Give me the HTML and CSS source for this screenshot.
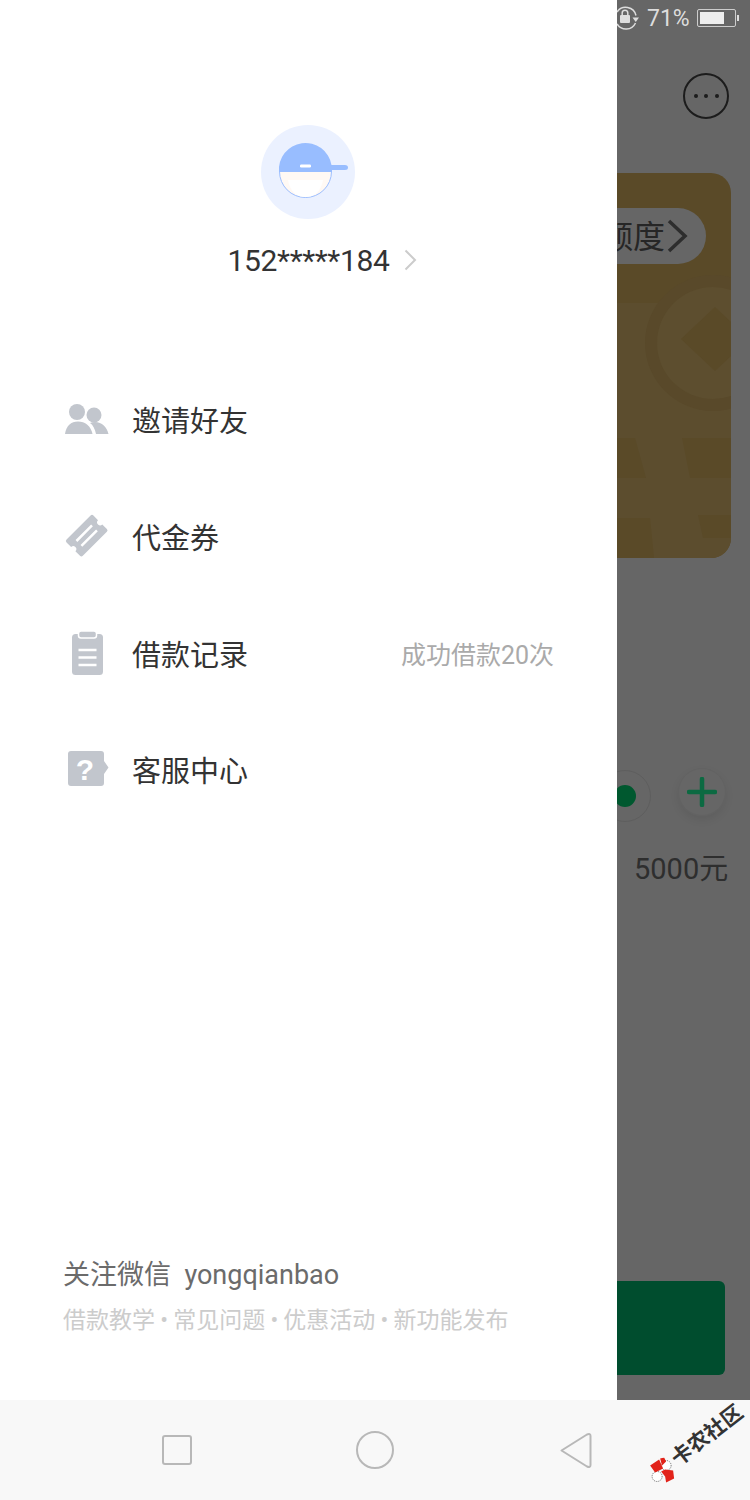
FILE: index.html
```html
<!DOCTYPE html>
<html lang="zh">
<head>
<meta charset="utf-8">
<title>用钱宝</title>
<link rel="stylesheet" href="styles.css">
</head>
<body>
<div class="screen">
  <div class="main">
    <aside class="drawer">
      <div class="avatar">
        <svg width="94" height="94" viewBox="0 0 94 94">
          <circle cx="47" cy="47" r="47" fill="#ebf1ff"/>
          <path d="M18.500 46.500H70.500A26 26 0 0 1 18.500 46.500Z" fill="#fff9f4" stroke="#9cbeff" stroke-width="1"/>
          <path d="M27 55H62C60 66 54 72 44.500 72S29 66 27 55Z" fill="#fff"/>
          <path d="M18 47A26.500 26.500 0 0 1 70.500 40H84Q87 40 87 42.500T84 45H71V47Z" fill="#98bdff"/>
          <rect x="39" y="39.500" width="11" height="3" rx="1.200" fill="#fff"/>
        </svg>
      </div>
      <div class="account">
        <span class="phone">152*****184</span>
        <svg class="account-arrow" width="13" height="22" viewBox="0 0 13 22"><path d="M1.500 1.500 11 11 1.500 20.500" fill="none" stroke="#ccc" stroke-width="2"/></svg>
      </div>
      <nav class="menu">
        <div class="item">
          <svg class="icon" width="46" height="32" viewBox="0 0 46 32">
            <circle cx="13" cy="9" r="8" fill="#c2c6cd"/>
            <circle cx="30" cy="12" r="7.500" fill="#c2c6cd"/>
            <path d="M1 31C2 23 7 18.500 14 18.500S27 23 28.500 31Z" fill="#c2c6cd"/>
            <path d="M26 20Q28 19 31 19C38 19 43 24 44.500 31H32C31 26 29 22 26 20Z" fill="#c2c6cd"/>
          </svg>
          <span class="label">邀请好友</span>
        </div>
        <div class="item">
          <svg class="icon" width="46" height="44" viewBox="0 0 46 44">
            <g transform="translate(22.700 21.700) rotate(-45)">
              <path d="M-17 -11.500H17Q19 -11.500 19 -9.500V-3A3 3 0 0 0 19 3V9.500Q19 11.500 17 11.500H-17Q-19 11.500 -19 9.500V3A3 3 0 0 0 -19 -3V-9.500Q-19 -11.500 -17 -11.500Z" fill="#c2c6cd"/>
              <path d="M-11 -3.500H11M-11 3.500H11" stroke="#fff" stroke-width="2.500"/>
            </g>
          </svg>
          <span class="label">代金券</span>
        </div>
        <div class="item">
          <svg class="icon" width="46" height="44" viewBox="0 0 46 44">
            <rect x="8" y="3" width="31" height="41" rx="3.500" fill="#c2c6cd"/>
            <rect x="14.500" y="0" width="18" height="7" rx="2.500" fill="#c2c6cd" stroke="#fff" stroke-width="1.500"/>
            <path d="M14.500 19H32.500M14.500 26.500H32.500M14.500 34H32.500" stroke="#fff" stroke-width="2.500"/>
          </svg>
          <span class="label">借款记录</span>
          <span class="note">成功借款20次</span>
        </div>
        <div class="item">
          <svg class="icon" width="46" height="36" viewBox="0 0 46 36">
            <path d="M7 0H37Q40 0 40 3V10L44.500 16.500 40 23V32Q40 35 37 35H7Q4 35 4 32V3Q4 0 7 0Z" fill="#c2c6cd"/>
            <text x="21" y="29" class="icon-q">?</text>
          </svg>
          <span class="label">客服中心</span>
        </div>
      </nav>
      <footer class="follow">
        <p class="wechat">关注微信&nbsp;&nbsp;yongqianbao</p>
        <p class="topics">借款教学 • 常见问题 • 优惠活动 • 新功能发布</p>
      </footer>
    </aside>
    <section class="backdrop">
      <div class="status">
        <svg class="rotate-lock" width="22" height="24" viewBox="0 0 22 24">
          <path d="M0 6A10.500 10.500 0 0 1 19 9.500M18.500 17A10.500 10.500 0 0 1 0 18" fill="none" stroke="#ddd" stroke-width="1.500"/>
          <rect x="3" y="9" width="10" height="8" rx="1" fill="#ddd"/>
          <path d="M5.200 9V7A2.800 2.800 0 0 1 10.800 7V9" fill="none" stroke="#ddd" stroke-width="1.500"/>
          <path d="M15.500 11.500H22L18.750 16Z" fill="#ddd"/>
        </svg>
        <span class="battery-text">71%</span>
        <span class="battery"><span class="battery-level"></span></span>
        <span class="battery-tip"></span>
      </div>
      <div class="more">
        <span class="more-dot"></span><span class="more-dot"></span><span class="more-dot"></span>
      </div>
      <div class="card">
        <svg class="card-art" width="114" height="385" viewBox="0 0 114 385">
          <path d="M0 130H114V385H0Z" fill="#5c4d2e"/>
          <circle cx="96" cy="170" r="68" fill="#59492a"/>
          <circle cx="96" cy="170" r="56" fill="#5d4e2f"/>
          <path d="M98 134 132 166 98 198 64 166Z" fill="#5a4a28"/>
          <path d="M0 265H18L29 305H0ZM65 265H114V305H73ZM81 342H114V365H86ZM0 345H33L37 385H0Z" fill="#5a4a28"/>
        </svg>
        <div class="pill">
          <span class="pill-text">额度</span>
          <svg width="21" height="34" viewBox="0 0 21 34"><path d="M2 2 18 17 2 32" fill="none" stroke="#2d2d2d" stroke-width="3.500"/></svg>
        </div>
      </div>
      <div class="stepper">
        <div class="step-minus"><span class="step-dot"></span></div>
        <div class="step-plus">
          <svg width="30" height="30" viewBox="0 0 30 30"><path d="M15 2V28M2 15H28" stroke="#0c6a42" stroke-width="4.500" stroke-linecap="round"/></svg>
        </div>
      </div>
      <div class="amount">5000元</div>
      <div class="submit"></div>
    </section>
  </div>
  <div class="navbar">
    <span class="nav-square"></span>
    <span class="nav-circle"></span>
    <svg class="nav-back" width="33" height="37" viewBox="0 0 33 37"><path d="M2.500 18.500 28 2.500Q31.500 1 31.500 4V33Q31.500 36 28 34.500Z" fill="none" stroke="#b8b8b8" stroke-width="2" stroke-linejoin="round"/></svg>
    <div class="watermark">
      <svg class="watermark-logo" width="26" height="26" viewBox="0 0 26 26">
        <circle cx="17" cy="8" r="5" fill="#fff" stroke="#333" stroke-width=".7" stroke-dasharray="1 1"/>
        <circle cx="8" cy="19" r="5" fill="#fff" stroke="#333" stroke-width=".7" stroke-dasharray="1 1"/>
        <path d="M1 8 10 2 14 11 6 15ZM11 1 15 0 17 4 13 8Z" fill="#e2231a"/>
        <path d="M12 14 16 12 24 13 25 21 17 25 16 19Z" fill="#e2231a"/>
      </svg>
      <span class="watermark-text">卡农社区</span>
    </div>
  </div>
</div>
</body>
</html>
```
FILE: styles.css
```css
* { box-sizing: border-box; }
html, body { margin: 0; padding: 0; }
body {
  width: 750px;
  height: 1500px;
  overflow: hidden;
  font-family: Roboto, "Noto Sans CJK SC", sans-serif;
  color: #333;
  background: #f8f8f8;
}
p { margin: 0; }
.screen { display: flex; flex-direction: column; height: 1500px; }
.main { display: flex; height: 1400px; }

/* drawer */
.drawer {
  width: 617px;
  flex: none;
  background: #fff;
  display: flex;
  flex-direction: column;
  padding-top: 125px;
}
.avatar { display: flex; justify-content: center; height: 94px; padding-right: 2px; }
.account {
  display: grid;
  grid-template-columns: 1fr auto 1fr;
  align-items: center;
  margin-top: 22px;
  height: 40px;
}
.phone { grid-column: 2; font-size: 30px; line-height: 40px; color: #333; letter-spacing: -.35px; }
.account-arrow { grid-column: 3; margin-left: 15px; margin-top: -3px; }
.menu { margin-top: 80px; display: flex; flex-direction: column; }
.item {
  height: 116.67px;
  display: flex;
  align-items: center;
  padding: 0 63px 0 64px;
}
.icon { flex: none; margin-right: 22px; }
.label { font-size: 29px; color: #333; }
.note { margin-left: auto; font-size: 25px; color: #aaa; }
.icon-q { font-family: "Liberation Sans", sans-serif; font-weight: 700; font-size: 30px; fill: #fff; text-anchor: middle; }
.follow { margin-top: auto; padding: 0 0 63px 63px; }
.wechat { font-size: 27px; line-height: 38px; color: #6b6b6b; }
.topics { font-size: 23px; line-height: 32px; margin-top: 11px; color: #ccc; word-spacing: -.5px; }

/* dimmed app behind the drawer */
.backdrop {
  flex: 1;
  min-width: 0;
  overflow: hidden;
  background: #666;
  display: flex;
  flex-direction: column;
}
.status { height: 36px; display: flex; align-items: center; color: #ddd; }
.rotate-lock { flex: none; }
.battery-text { margin-left: 8px; font-size: 23px; color: #ddd; }
.battery {
  margin-left: 7px;
  width: 39px;
  height: 18px;
  border: 1px solid #ccc;
  border-radius: 2px;
  padding: 2px;
  display: flex;
}
.battery-level { width: 24px; background: #eee; }
.battery-tip { width: 2px; height: 6px; margin-left: 1px; background: #ddd; }
.more {
  margin: 37px 0 0 66px;
  width: 46px;
  height: 46px;
  flex: none;
  border: 2px solid #1c1c1c;
  border-radius: 50%;
  display: flex;
  align-items: center;
  justify-content: center;
  gap: 6.500px;
}
.more-dot { width: 4px; height: 4px; border-radius: 50%; background: #1c1c1c; }
.card {
  position: relative;
  margin-top: 54px;
  width: 114px;
  height: 385px;
  flex: none;
  overflow: hidden;
  background: #5a4a28;
  border-radius: 0 20px 20px 0;
  padding-top: 35px;
}
.card-art { position: absolute; left: 0; top: 0; }
.pill {
  position: relative;
  width: 89px;
  height: 56px;
  background: #666;
  border-radius: 0 28px 28px 0;
  display: flex;
  align-items: center;
  justify-content: flex-end;
  padding-right: 18px;
  gap: 2px;
  overflow: hidden;
}
.pill-text { font-size: 32px; color: #262626; white-space: nowrap; flex: none; margin-bottom: 4px; }
.pill svg { flex: none; }
.stepper { display: flex; margin-top: 210px; height: 60px; flex: none; }
.step-minus {
  margin-left: -18px;
  margin-top: 2px;
  width: 52px;
  height: 52px;
  flex: none;
  border: 1px solid #5e5e5e;
  border-radius: 50%;
  display: flex;
  align-items: center;
  justify-content: center;
}
.step-dot { width: 22px; height: 22px; border-radius: 50%; background: #00582f; }
.step-plus {
  margin-left: 27px;
  width: 48px;
  height: 48px;
  flex: none;
  border-radius: 50%;
  border: 1px solid #626262;
  box-shadow: 0 4px 8px rgba(0,0,0,.08);
  display: flex;
  align-items: center;
  justify-content: center;
}
.amount { margin: 21px 0 0 17px; font-size: 29px; line-height: 40px; color: #2e2e2e; white-space: nowrap; flex: none; }
.submit {
  margin-top: 392px;
  width: 108px;
  height: 94px;
  flex: none;
  background: #004d2e;
  border-radius: 0 6px 6px 0;
}

/* navigation bar */
.navbar {
  position: relative;
  height: 100px;
  background: #f8f8f8;
  display: flex;
  align-items: center;
  padding-left: 162px;
}
.nav-square { width: 30px; height: 30px; border: 2px solid #b8b8b8; border-radius: 3px; }
.nav-circle { margin-left: 164px; width: 38px; height: 38px; border: 2px solid #b8b8b8; border-radius: 50%; }
.nav-back { flex: none; margin-left: 165px; }
.watermark {
  position: absolute;
  left: 640px;
  top: 31px;
  display: flex;
  align-items: center;
  gap: 2px;
  transform: rotate(-38deg);
  transform-origin: center;
}
.watermark-logo { flex: none; transform: rotate(38deg); }
.watermark-text { font-size: 21px; font-weight: 700; color: #333; white-space: nowrap; line-height: 1; }
```
